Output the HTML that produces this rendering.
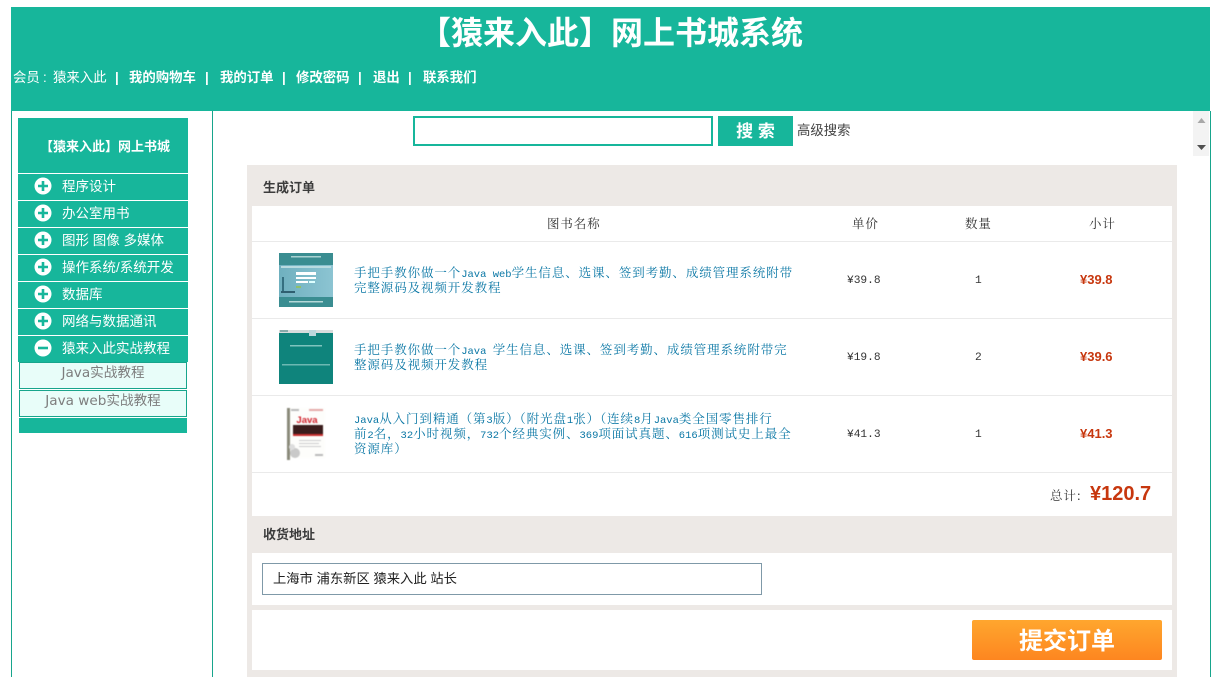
<!DOCTYPE html>
<html lang="zh"><head><meta charset="utf-8"><title>网上书城系统</title>
<style>
html,body{margin:0;padding:0;background:#fff;width:1230px;height:677px;overflow:hidden}
body{position:relative;font-family:"Liberation Sans","WenQuanYi Zen Hei","Noto Sans CJK SC",sans-serif;color:#333}
.a{position:absolute;white-space:nowrap}
.b{position:absolute}
.g{background:#17b69b}
.menu{position:absolute;left:18px;width:170px;height:26px;background:#17b69b;color:#fff;font-size:13.5px;line-height:25px}
.menu span{position:absolute;left:44px;top:0}
.menu svg{position:absolute;left:16px;top:3px}
.sub{position:absolute;left:19px;width:166px;height:25px;background:#e8fdf9;border:1px solid #17a58c;color:#7d7d7d;font-size:13.6px;line-height:21px;text-align:center;font-family:"DejaVu Sans","WenQuanYi Zen Hei","Noto Sans CJK SC",sans-serif}
.s{font-family:"Noto Serif CJK SC","Liberation Serif",serif;font-size:12.5px;letter-spacing:.9px}
.s i{font-style:normal;font-family:"Liberation Mono",monospace;font-size:10.5px;letter-spacing:0;line-height:0}
.nav{font-size:13.4px;font-weight:bold;color:#fff;top:70px;line-height:16px}
.link{color:#0a77a5;left:354px;width:460px;line-height:15px}
.line{position:absolute;left:252px;width:920px;height:1px;background:#eaeaea}
.red{color:#c7370e;font-size:13px;font-weight:bold}
.num{font-family:"Liberation Mono",monospace;font-size:11.2px;color:#333;line-height:15px}
</style></head><body>
<div class="b g" style="left:11px;top:7px;width:1199px;height:104px"></div>
<div class="b" style="left:11px;top:111px;width:1px;height:566px;background:#17a58c"></div>
<div class="b" style="left:212px;top:111px;width:1px;height:566px;background:#17a58c"></div>
<div class="b" style="left:1210px;top:111px;width:1px;height:566px;background:#17a58c"></div>

<div class="a" style="left:419px;top:12px;font-size:32px;line-height:42px;font-weight:bold;color:#fff;font-family:'Liberation Sans','Noto Sans CJK SC',sans-serif">【猿来入此】网上书城系统</div>
<div class="a" style="left:13px;top:70px;font-size:13.4px;line-height:16px;color:#fff">会员</div>
<div class="a" style="left:43px;top:70px;font-size:13.4px;line-height:16px;color:#fff">:</div>
<div class="a" style="left:53px;top:70px;font-size:13.4px;line-height:16px;color:#fff">猿来入此</div>
<div class="a nav" style="left:115px">|</div>
<div class="a nav" style="left:129px">我的购物车</div>
<div class="a nav" style="left:205px">|</div>
<div class="a nav" style="left:220px">我的订单</div>
<div class="a nav" style="left:282px">|</div>
<div class="a nav" style="left:296px">修改密码</div>
<div class="a nav" style="left:358px">|</div>
<div class="a nav" style="left:373px">退出</div>
<div class="a nav" style="left:408px">|</div>
<div class="a nav" style="left:423px">联系我们</div>

<div class="b g" style="left:18px;top:118px;width:170px;height:55px"></div>
<div class="a" style="left:40px;top:139px;font-size:13px;line-height:16px;font-weight:bold;color:#fff">【猿来入此】网上书城</div>

<div class="menu" style="top:174px"><svg width="18" height="18"><circle cx="9" cy="9" r="8.5" fill="#fff"/><path d="M4 9h10M9 4v10" stroke="#17b69b" stroke-width="2.6"/></svg><span>程序设计</span></div>
<div class="menu" style="top:201px"><svg width="18" height="18"><circle cx="9" cy="9" r="8.5" fill="#fff"/><path d="M4 9h10M9 4v10" stroke="#17b69b" stroke-width="2.6"/></svg><span>办公室用书</span></div>
<div class="menu" style="top:228px"><svg width="18" height="18"><circle cx="9" cy="9" r="8.5" fill="#fff"/><path d="M4 9h10M9 4v10" stroke="#17b69b" stroke-width="2.6"/></svg><span>图形 图像 多媒体</span></div>
<div class="menu" style="top:255px"><svg width="18" height="18"><circle cx="9" cy="9" r="8.5" fill="#fff"/><path d="M4 9h10M9 4v10" stroke="#17b69b" stroke-width="2.6"/></svg><span>操作系统/系统开发</span></div>
<div class="menu" style="top:282px"><svg width="18" height="18"><circle cx="9" cy="9" r="8.5" fill="#fff"/><path d="M4 9h10M9 4v10" stroke="#17b69b" stroke-width="2.6"/></svg><span>数据库</span></div>
<div class="menu" style="top:309px"><svg width="18" height="18"><circle cx="9" cy="9" r="8.5" fill="#fff"/><path d="M4 9h10M9 4v10" stroke="#17b69b" stroke-width="2.6"/></svg><span>网络与数据通讯</span></div>
<div class="menu" style="top:336px"><svg width="18" height="18"><circle cx="9" cy="9" r="8.5" fill="#fff"/><path d="M4 9h10" stroke="#17b69b" stroke-width="2.6"/></svg><span>猿来入此实战教程</span></div>
<div class="sub" style="top:362px">Java实战教程</div>
<div class="sub" style="top:390px">Java web实战教程</div>
<div class="b g" style="left:19px;top:418px;width:168px;height:15px"></div>

<div class="b" style="left:413px;top:116px;width:296px;height:26px;border:2px solid #17b69b;background:#fff"></div>
<div class="b g" style="left:718px;top:116px;width:75px;height:30px;color:#fff;font-size:17px;line-height:31px;text-align:center;font-weight:bold">搜 索</div>
<div class="a" style="left:797px;top:123px;font-size:13.4px;line-height:16px;color:#444">高级搜索</div>

<div class="b" style="left:1193px;top:111px;width:16px;height:45px;background:#f3f3f3"></div>
<svg class="b" style="left:1193px;top:111px" width="16" height="45"><path d="M4.500 12l4-5 4 5z" fill="#a8a8a8"/><path d="M4 34h9l-4.500 5z" fill="#505050"/></svg>

<div class="b" style="left:247px;top:165px;width:930px;height:512px;background:#ede9e6"></div>
<div class="b" style="left:252px;top:206px;width:920px;height:310px;background:#fff"></div>
<div class="b" style="left:252px;top:553px;width:920px;height:52px;background:#fff"></div>
<div class="b" style="left:252px;top:610px;width:920px;height:60px;background:#fff"></div>
<div class="line" style="top:241px"></div>
<div class="line" style="top:318px"></div>
<div class="line" style="top:395px"></div>
<div class="line" style="top:472px"></div>

<div class="a" style="left:263px;top:180px;font-size:13px;line-height:16px;font-weight:bold;color:#3c3c3c">生成订单</div>
<div class="a" style="left:263px;top:527px;font-size:13px;line-height:16px;font-weight:bold;color:#3c3c3c">收货地址</div>

<div class="a s" style="left:547px;top:216px;line-height:15px">图书名称</div>
<div class="a s" style="left:852px;top:216px;line-height:15px">单价</div>
<div class="a s" style="left:965px;top:216px;line-height:15px">数量</div>
<div class="a s" style="left:1089px;top:216px;line-height:15px">小计</div>

<svg class="b" style="left:279px;top:253px" width="54" height="54">
<defs><linearGradient id="t1" x1="0" y1="0" x2="1" y2="0"><stop offset="0" stop-color="#6fb0bf"/><stop offset="1" stop-color="#8cc4d2"/></linearGradient></defs>
<rect width="54" height="54" fill="#3a8d91"/><rect y="12" width="54" height="32" fill="url(#t1)"/>
<rect x="12" y="3" width="30" height="1.500" fill="#a9d2d2"/><rect x="2" y="13" width="50" height="2" fill="#b9dbe0"/>
<rect x="17" y="19" width="20" height="3" fill="#fff"/><rect x="17" y="24" width="20" height="2" fill="#fff"/><rect x="17" y="28" width="12" height="2" fill="#fff"/><rect x="30" y="28" width="6" height="2" fill="#dff"/><rect x="17" y="33" width="5" height="2" fill="#8fc06a"/>
<rect x="2" y="38" width="14" height="2" fill="#2f5f70"/><rect x="3" y="24" width="2" height="14" fill="#356f80"/><rect x="10" y="48" width="34" height="1.500" fill="#b4d8d8"/></svg>

<svg class="b" style="left:279px;top:330px" width="54" height="54">
<rect width="54" height="54" fill="#0f847c"/><rect width="54" height="3" fill="#d8dcdc"/><rect x="1" y="0" width="8" height="2" fill="#8aa"/><rect x="30" y="0" width="7" height="6" fill="#bcd8dc"/>
<rect x="11" y="15" width="32" height="1.500" fill="#7fc4be"/><rect x="3" y="34" width="48" height="1.500" fill="#6cb8b2"/></svg>

<svg class="b" style="left:279px;top:407px;filter:blur(.4px)" width="54" height="54">
<rect x="8" y="1" width="3" height="52" fill="#8a8a7a"/><rect x="11" y="1" width="35" height="50" fill="#fdfdfb"/>
<rect x="12" y="2" width="8" height="2" fill="#bbb"/><rect x="30" y="2" width="14" height="2" fill="#e5aaaa"/>
<text x="28" y="16" font-size="9.500" font-weight="bold" fill="#d0202a" text-anchor="middle" font-family="Liberation Sans">Java</text>
<rect x="14" y="18" width="30" height="9" fill="#3a1c1c"/><rect x="14" y="27" width="30" height="2" fill="#c83030"/>
<rect x="20" y="33" width="22" height="1" fill="#ccc"/><rect x="20" y="36" width="20" height="1" fill="#ccc"/><rect x="20" y="39" width="22" height="1" fill="#ccc"/>
<circle cx="16" cy="46" r="5" fill="#c9c9c9"/><circle cx="13" cy="40" r="3" fill="#ddd"/><rect x="36" y="47" width="8" height="2" fill="#bbb"/></svg>

<div class="a s link" style="top:265px">手把手教你做一个<i>Java web</i>学生信息、选课、签到考勤、成绩管理系统附带<br>完整源码及视频开发教程</div>
<div class="a s link" style="top:342px">手把手教你做一个<i>Java </i>学生信息、选课、签到考勤、成绩管理系统附带完<br>整源码及视频开发教程</div>
<div class="a s link" style="top:411px"><i>Java</i>从入门到精通（第<i>3</i>版）（附光盘<i>1</i>张）（连续<i>8</i>月<i>Java</i>类全国零售排行<br>前<i>2</i>名，<i>32</i>小时视频，<i>732</i>个经典实例、<i>369</i>项面试真题、<i>616</i>项测试史上最全<br>资源库）</div>

<div class="a num" style="left:847px;top:274px">¥39.8</div>
<div class="a num" style="left:847px;top:351px">¥19.8</div>
<div class="a num" style="left:847px;top:428px">¥41.3</div>
<div class="a num" style="left:975px;top:274px">1</div>
<div class="a num" style="left:975px;top:351px">2</div>
<div class="a num" style="left:975px;top:428px">1</div>
<div class="a red" style="left:1080px;top:272px;line-height:15px">¥39.8</div>
<div class="a red" style="left:1080px;top:349px;line-height:15px">¥39.6</div>
<div class="a red" style="left:1080px;top:426px;line-height:15px">¥41.3</div>

<div class="a s" style="left:1050px;top:488px;line-height:15px">总计:</div>
<div class="a" style="left:1090px;top:482px;font-size:20px;line-height:24px;font-weight:bold;color:#c7370e">¥120.7</div>

<div class="b" style="left:262px;top:563px;width:498px;height:30px;border:1px solid #7f99a8;background:#fff"></div>
<div class="a" style="left:273px;top:571px;font-size:13.3px;line-height:16px;color:#222">上海市 浦东新区 猿来入此 站长</div>

<div class="b" style="left:972px;top:620px;width:190px;height:40px;border-radius:2px;background:linear-gradient(#ffa62e,#fd8620);color:#fff;font-size:24px;font-weight:bold;line-height:43px;text-align:center;font-family:'Liberation Sans','Noto Sans CJK SC',sans-serif">提交订单</div>
</body></html>
